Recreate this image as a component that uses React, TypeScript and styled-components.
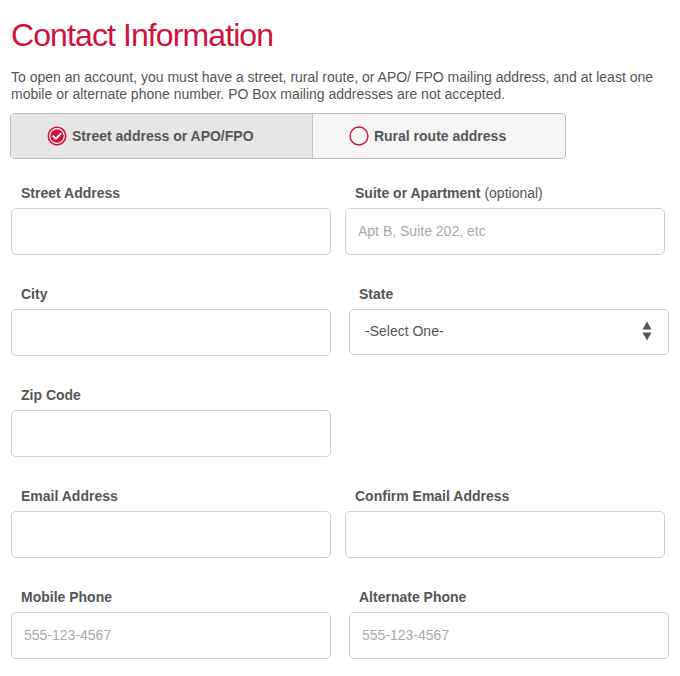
import React from 'react';
import styled, { createGlobalStyle } from 'styled-components';

const GlobalStyle = createGlobalStyle`
  html, body {
    margin: 0;
    padding: 0;
    background: #fff;
  }
  body {
    font-family: "Liberation Sans", Arial, Helvetica, sans-serif;
    color: #555;
  }
  * {
    box-sizing: border-box;
  }
`;

const RED = '#d2103c';

const Page = styled.div`
  width: 680px;
  padding: 19px 14px 0 11px;
`;

const Title = styled.h1`
  margin: 0;
  font-size: 32px;
  line-height: 32px;
  font-weight: 400;
  color: ${RED};
  letter-spacing: -0.9px;
`;

const Intro = styled.p`
  margin: 17.5px 0 0;
  font-size: 14px;
  line-height: 17px;
  color: #555;
`;

const RadioGroup = styled.div`
  display: flex;
  width: 556px;
  height: 46px;
  margin: 10.5px 0 0 -1px;
  border: 1px solid #bcbcbc;
  border-radius: 4px;
  overflow: hidden;
`;

const RadioOption = styled.label<{ $checked?: boolean; $width: number }>`
  display: flex;
  align-items: center;
  gap: 5px;
  width: ${(p) => p.$width}px;
  padding-left: 36px;
  background: ${(p) => (p.$checked ? '#e6e6e6' : '#f5f5f5')};
  font-size: 14px;
  font-weight: 700;
  color: #555;
  & + & {
    border-left: 1px solid #c4c4c4;
  }
`;

const Grid = styled.div`
  display: grid;
  grid-template-columns: 320px 320px;
  column-gap: 14px;
  margin-top: 25.5px;
`;

const Field = styled.div<{ $shift?: number }>`
  display: flex;
  flex-direction: column;
  margin-left: ${(p) => p.$shift || 0}px;
  margin-bottom: 31px;
`;

const Label = styled.div`
  height: 17px;
  line-height: 17px;
  padding-left: 10px;
  font-size: 14px;
  font-weight: 700;
  color: #555;
  margin-bottom: 6px;
  span {
    font-weight: 400;
  }
`;

const Input = styled.input`
  width: 320px;
  height: 47px;
  padding: 0 12px;
  border: 1px solid #cfcfcf;
  border-radius: 5px;
  background: #fff;
  font-family: "Liberation Sans", Arial, Helvetica, sans-serif;
  font-size: 14px;
  color: #555;
  outline: none;
  &::placeholder {
    color: #a9a9a9;
  }
`;

const SelectBox = styled.div`
  display: flex;
  align-items: center;
  justify-content: space-between;
  width: 320px;
  height: 46px;
  padding: 0 16px 2px 15px;
  border: 1px solid #cfcfcf;
  border-radius: 5px;
  font-size: 14px;
  color: #555;
`;

const Empty = styled.div``;

const CheckedIcon = () => (
  <svg width="20" height="20" viewBox="0 0 20 20">
    <circle cx="10" cy="10" r="9.5" fill={RED} />
    <circle cx="10" cy="10" r="7.3" fill={RED} stroke="#fff" strokeWidth="1.2" />
    <path d="M6.3 10.2 L8.9 12.7 L13.8 7.6" fill="none" stroke="#fff" strokeWidth="2" strokeLinecap="round" strokeLinejoin="round" />
  </svg>
);

const EmptyIcon = () => (
  <svg width="20" height="20" viewBox="0 0 20 20">
    <circle cx="10" cy="10" r="9" fill="none" stroke={RED} strokeWidth="1.4" />
  </svg>
);

const Arrows = () => (
  <svg width="10" height="20" viewBox="0 0 10 20">
    <path d="M5 0.5 L9.5 8.5 L0.5 8.5 Z" fill="#555" />
    <path d="M0.5 11.5 L9.5 11.5 L5 19.5 Z" fill="#555" />
  </svg>
);

const App = () => {
  return (
    <Page>
      <GlobalStyle />
      <Title>Contact Information</Title>
      <Intro>
        To open an account, you must have a street, rural route, or APO/ FPO mailing address, and at least one
        mobile or alternate phone number. PO Box mailing addresses are not accepted.
      </Intro>
      <RadioGroup>
        <RadioOption $checked $width={302}>
          <CheckedIcon />
          Street address or APO/FPO
        </RadioOption>
        <RadioOption $width={254}>
          <EmptyIcon />
          Rural route address
        </RadioOption>
      </RadioGroup>
      <Grid>
        <Field>
          <Label>Street Address</Label>
          <Input />
        </Field>
        <Field>
          <Label>
            Suite or Apartment <span>(optional)</span>
          </Label>
          <Input placeholder="Apt B, Suite 202, etc" />
        </Field>
        <Field>
          <Label>City</Label>
          <Input />
        </Field>
        <Field $shift={4}>
          <Label>State</Label>
          <SelectBox>
            -Select One-
            <Arrows />
          </SelectBox>
        </Field>
        <Field>
          <Label>Zip Code</Label>
          <Input />
        </Field>
        <Empty />
        <Field>
          <Label>Email Address</Label>
          <Input />
        </Field>
        <Field>
          <Label>Confirm Email Address</Label>
          <Input />
        </Field>
        <Field>
          <Label>Mobile Phone</Label>
          <Input placeholder="555-123-4567" />
        </Field>
        <Field $shift={4}>
          <Label>Alternate Phone</Label>
          <Input placeholder="555-123-4567" />
        </Field>
      </Grid>
    </Page>
  );
};

export default App;
